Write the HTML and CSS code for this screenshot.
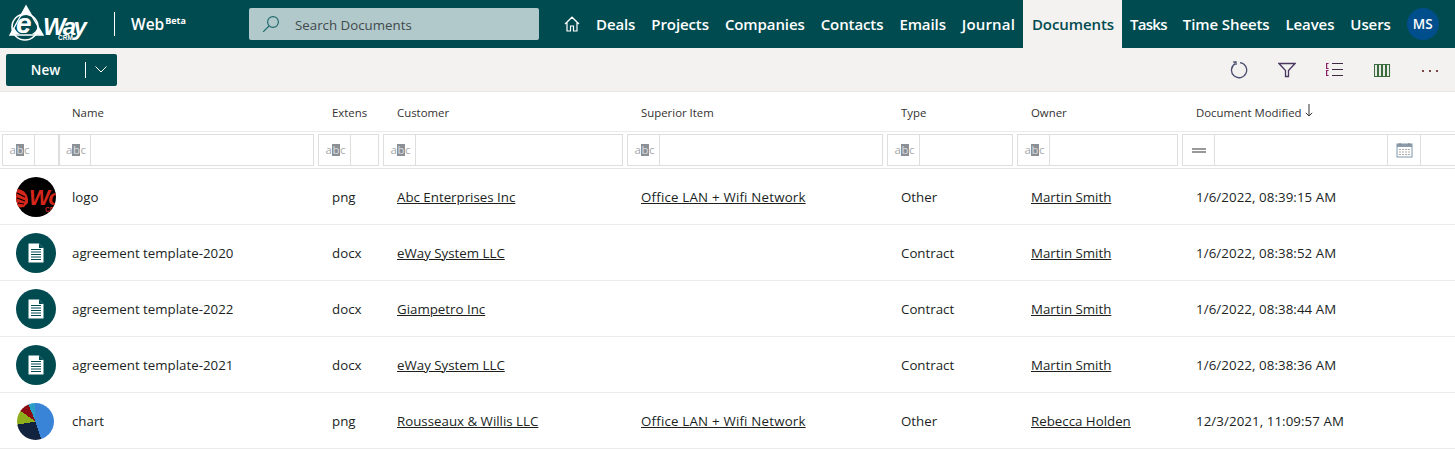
FILE: index.html
```html
<!DOCTYPE html>
<html lang="en">
<head>
<meta charset="utf-8">
<title>eWay-CRM Documents</title>
<link rel="stylesheet" href="styles.css">
</head>
<body>
<header class="topbar">
  <div class="brand">
    <svg class="logo" width="92" height="44" viewBox="0 0 92 44">
      <path d="M18 4 L2 33 L35 33 Z" fill="none" stroke="#fff" stroke-width="1.4"/>
      <circle cx="17" cy="25" r="13" fill="none" stroke="#fff" stroke-width="1.6"/>
      <path d="M18 4 L12 15 Q18 11 24 15 Z M2 33 L6 25 Q8 30 12 32 Z M35 33 L30 25 Q28 30 24 32 Z" fill="#fff"/>
      <text x="8" y="31" class="logo-e">e</text>
      <text x="35" y="33" class="logo-way">Way</text>
      <text x="50" y="37.5" class="logo-crm">CRM</text>
    </svg>
    <span class="brand-sep"></span>
    <span class="brand-web">Web<sup>Beta</sup></span>
  </div>
  <div class="search">
    <svg width="18" height="18" viewBox="0 0 18 18" fill="none" stroke="#1f6a6e" stroke-width="1.2"><circle cx="11" cy="7" r="5.4"/><path d="M7 11 L1.2 16.8"/></svg>
    <span class="search-text">Search Documents</span>
  </div>
  <nav class="nav">
    <svg class="home" width="16" height="16" viewBox="0 0 16 16" fill="none" stroke="#fff" stroke-width="1.2"><path d="M1 8 L8 1.2 L15 8 M3 6.5 V15 H6.5 V10 H9.5 V15 H13 V6.5"/></svg>
    <a class="nav-item">Deals</a>
    <a class="nav-item">Projects</a>
    <a class="nav-item">Companies</a>
    <a class="nav-item">Contacts</a>
    <a class="nav-item">Emails</a>
    <a class="nav-item wide">Journal</a>
    <a class="nav-item active">Documents</a>
    <a class="nav-item tight">Tasks</a>
    <a class="nav-item">Time Sheets</a>
    <a class="nav-item">Leaves</a>
    <a class="nav-item">Users</a>
    <span class="avatar">MS</span>
  </nav>
</header>

<div class="toolbar">
  <button class="new-btn"><span class="new-label">New</span><span class="new-sep"></span>
    <svg width="12" height="7" viewBox="0 0 12 7" fill="none" stroke="#fff" stroke-width="1"><path d="M.5 .5 L6 6 L11.5 .5"/></svg>
  </button>
  <div class="tools">
    <svg width="18" height="18" viewBox="0 0 18 18" fill="none" stroke="#4b4e6e" stroke-width="1.3"><path d="M5.2 2.6 A7.6 7.6 0 1 0 10 1.6"/><path d="M3.2 1 H6 V4"/></svg>
    <svg width="18" height="18" viewBox="0 0 18 18" fill="none" stroke="#4a3660" stroke-width="1.3"><path d="M1 2.5 H17 L10.5 9.5 V15.5 H7.5 V9.5 Z"/></svg>
    <svg width="18" height="18" viewBox="0 0 18 18" fill="none" stroke-width="1.2"><path d="M6 2.5 H17 M6 8.5 H17 M6 14.5 H17" stroke="#3f2a45"/><path d="M2.6 2.5 H.6 V7.5 H2.6 M2.6 9.5 H.6 V14.5 H2.6" stroke="#8a1f66"/></svg>
    <svg width="18" height="18" viewBox="0 0 18 18" fill="none" stroke="#3a6b3c" stroke-width="1.1"><path d="M.5 3.5 H3.5 V15.5 H.5 Z M4.5 3.5 H7.5 V15.5 H4.5 Z M8.5 3.5 H11.5 V15.5 H8.5 Z M12.5 3.5 H15.5 V15.5 H12.5 Z"/></svg>
    <svg width="18" height="18" viewBox="0 0 18 18" fill="#7d4a4a"><rect x="0" y="9" width="2" height="2"/><rect x="7" y="9" width="2" height="2"/><rect x="14" y="9" width="2" height="2"/></svg>
  </div>
</div>

<div class="grid head">
  <div></div>
  <div class="hc first">Name</div>
  <div class="hc">Extens</div>
  <div class="hc">Customer</div>
  <div class="hc">Superior Item</div>
  <div class="hc">Type</div>
  <div class="hc">Owner</div>
  <div class="hc">Document Modified <svg class="sort" width="8" height="13" viewBox="0 0 8 13" fill="none" stroke="#333" stroke-width="1"><path d="M4 0 V12 M.8 8.8 L4 12 L7.2 8.8"/></svg></div>
  <div></div>
</div>

<div class="grid filters">
  <div class="fbox lead"><span class="op"><span class="abc">a<b>b</b>c</span></span></div>
  <div class="fbox"><span class="op"><span class="abc">a<b>b</b>c</span></span></div>
  <div class="fbox"><span class="op"><span class="abc">a<b>b</b>c</span></span></div>
  <div class="fbox"><span class="op"><span class="abc">a<b>b</b>c</span></span></div>
  <div class="fbox"><span class="op"><span class="abc">a<b>b</b>c</span></span></div>
  <div class="fbox"><span class="op"><span class="abc">a<b>b</b>c</span></span></div>
  <div class="fbox"><span class="op"><span class="abc">a<b>b</b>c</span></span></div>
  <div class="fbox date"><span class="op"><span class="eq"></span></span><span class="fill"></span>
    <span class="cal"><svg width="17" height="16" viewBox="0 0 17 16"><rect x="1" y="2" width="15" height="13" fill="#fff" stroke="#7f97ab"/><rect x="1" y="2" width="15" height="3" fill="#8c9bab"/><path d="M4 1 V3 M13 1 V3" stroke="#777"/><path d="M3 7.5 H14 M3 10 H14 M3 12.5 H14" stroke="#a9a9a9" stroke-dasharray="2 1"/></svg></span></div>
  <div class="fbox tail"></div>
</div>

<div class="grid row">
  <div class="ic"><svg class="thumb" width="40" height="40" viewBox="0 0 40 40"><defs><clipPath id="cl"><circle cx="20" cy="20" r="20"/></clipPath></defs><g clip-path="url(#cl)"><rect width="40" height="40" fill="#000"/><path d="M0 12 C8 12 13 18 12 26 L8 30 C4 31 1 30 0 28 Z" fill="#d4261b"/><path d="M1 16 L9 20 M1 21 L9 24 M2 26 L8 27" stroke="#000" stroke-width="1.2"/><text x="13" y="28" class="thumb-logo">Wo</text><text x="29" y="35" class="thumb-crm">CR</text></g></svg></div>
  <div class="c first">logo</div><div class="c">png</div><div class="c"><a>Abc Enterprises Inc</a></div><div class="c"><a class="spaced">Office LAN + Wifi Network</a></div><div class="c">Other</div><div class="c"><a>Martin Smith</a></div><div class="c stamp">1/6/2022, 08:39:15 AM</div><div></div>
</div>
<div class="grid row">
  <div class="ic"><span class="doc"><svg width="16" height="20" viewBox="0 0 16 20"><path d="M.5 .5 H11 L15.5 5 V19.5 H.5 Z" fill="#fff"/><path d="M11 .5 V5 H15.5 Z" fill="#004b50"/><path d="M3 6.5 H13 M3 9 H13 M3 11.5 H13 M3 14 H13 M3 16.5 H13" stroke="#004b50" stroke-width="1"/></svg></span></div>
  <div class="c first">agreement template-2020</div><div class="c">docx</div><div class="c"><a>eWay System LLC</a></div><div class="c"></div><div class="c">Contract</div><div class="c"><a>Martin Smith</a></div><div class="c stamp">1/6/2022, 08:38:52 AM</div><div></div>
</div>
<div class="grid row">
  <div class="ic"><span class="doc"><svg width="16" height="20" viewBox="0 0 16 20"><path d="M.5 .5 H11 L15.5 5 V19.5 H.5 Z" fill="#fff"/><path d="M11 .5 V5 H15.5 Z" fill="#004b50"/><path d="M3 6.5 H13 M3 9 H13 M3 11.5 H13 M3 14 H13 M3 16.5 H13" stroke="#004b50" stroke-width="1"/></svg></span></div>
  <div class="c first">agreement template-2022</div><div class="c">docx</div><div class="c"><a>Giampetro Inc</a></div><div class="c"></div><div class="c">Contract</div><div class="c"><a>Martin Smith</a></div><div class="c stamp">1/6/2022, 08:38:44 AM</div><div></div>
</div>
<div class="grid row">
  <div class="ic"><span class="doc"><svg width="16" height="20" viewBox="0 0 16 20"><path d="M.5 .5 H11 L15.5 5 V19.5 H.5 Z" fill="#fff"/><path d="M11 .5 V5 H15.5 Z" fill="#004b50"/><path d="M3 6.5 H13 M3 9 H13 M3 11.5 H13 M3 14 H13 M3 16.5 H13" stroke="#004b50" stroke-width="1"/></svg></span></div>
  <div class="c first">agreement template-2021</div><div class="c">docx</div><div class="c"><a>eWay System LLC</a></div><div class="c"></div><div class="c">Contract</div><div class="c"><a>Martin Smith</a></div><div class="c stamp">1/6/2022, 08:38:36 AM</div><div></div>
</div>
<div class="grid row">
  <div class="ic"><span class="pie"></span></div>
  <div class="c first">chart</div><div class="c">png</div><div class="c"><a>Rousseaux &amp; Willis LLC</a></div><div class="c"><a class="spaced">Office LAN + Wifi Network</a></div><div class="c">Other</div><div class="c"><a>Rebecca Holden</a></div><div class="c stamp">12/3/2021, 11:09:57 AM</div><div></div>
</div>
</body>
</html>
```
FILE: styles.css
```css
* { box-sizing: border-box; }
html, body { margin: 0; padding: 0; background: #fff; overflow: hidden; }
body { font-family: "Open Sans", "Noto Sans", sans-serif; font-size: 13px; color: #201f1e; }

.topbar { height: 48px; background: #004b50; display: flex; align-items: stretch; color: #fff; }
.brand { width: 249px; display: flex; align-items: center; padding-left: 8px; flex: none; }
.logo { flex: none; }
.logo-e { font: italic 700 28px "Liberation Sans", sans-serif; fill: #fff; }
.logo-way { font: italic 700 24px "Liberation Sans", sans-serif; fill: #fff; letter-spacing: -2.5px; }
.logo-crm { font: 700 6.5px "Liberation Sans", sans-serif; fill: #fff; }
.brand-sep { width: 1px; height: 24px; background: #fff; margin-left: 14px; }
.brand-web { font-weight: 600; font-size: 15.5px; margin-left: 16px; line-height: 20px; }
.brand-web sup { font-size: 9px; font-weight: 700; vertical-align: 6px; line-height: 0; margin-left: 1px; }

.search { width: 290px; height: 32px; margin-top: 8px; background: #b2c9cb; border-radius: 2px; display: flex; align-items: center; padding-left: 13px; gap: 15px; color: #3f4a4c; font-size: 13.3px; flex: none; }
.search-text { padding-top: 2px; }

.nav { display: flex; align-items: stretch; margin-left: 25px; flex: none; }
.home { align-self: center; margin-right: 8px; }
.nav-item { display: flex; align-items: center; padding: 0 8px; font-weight: 600; font-size: 15px; letter-spacing: -.1px; white-space: nowrap; }
.nav-item.wide { letter-spacing: .15px; }
.nav-item.tight { letter-spacing: -.7px; }
.nav-item.active { background: #f3f2f1; color: #004b50; padding: 0 8px 0 9px; }
.avatar { width: 32px; height: 32px; border-radius: 50%; background: #004e8c; align-self: center; display: flex; align-items: center; justify-content: center; font-weight: 600; font-size: 13.5px; margin-left: 8px; }

.toolbar { height: 44px; background: #f3f2f1; border-bottom: 1px solid #e8e6e4; display: flex; align-items: center; justify-content: space-between; padding: 0 15px 0 6px; }
.new-btn { width: 111px; height: 32px; padding: 0; background: #004b50; border: 0; border-radius: 2px; color: #fff; display: flex; align-items: center; font-family: inherit; }
.new-label { width: 79px; text-align: center; font-weight: 600; font-size: 13.5px; }
.new-sep { width: 1px; height: 16px; background: #fff; margin-right: 9px; }
.tools { display: flex; gap: 30px; align-items: center; }

.grid { display: grid; grid-template-columns: 59px 259px 65px 244px 260px 130px 165px 239px 1fr; }
.head { height: 40px; padding-top: 2px; border-bottom: 1px solid #edebe9; align-items: center; font-size: 11.4px; color: #323130; }
.hc { padding-left: 14px; display: flex; align-items: center; gap: 3px; white-space: nowrap; }
.hc.first, .c.first { padding-left: 13px; }
.sort { margin-top: -4px; }

.filters { height: 37px; border-bottom: 1px solid #e6e4e2; padding-top: 2px; }
.fbox { height: 32px; margin-right: 4px; border: 1px solid #dedede; display: flex; background: #fff; }
.fbox.lead { margin-left: 2px; margin-right: 0; }
.fbox.date { margin-right: 0; }
.fbox.tail { margin-right: 0; border-left: 0; border-right: 0; }
.op { width: 32px; flex: none; border-right: 1px solid #dedede; display: flex; align-items: center; justify-content: center; padding-left: 2px; }
.fbox.date .op { padding-left: 0; }
.fbox.lead + .fbox .op { width: 31px; }
.abc { font-size: 11.5px; color: #a4a8ad; line-height: 12px; }
.abc b { font-weight: 400; background: #8b9097; color: #d8dadc; padding: 0 .5px; display: inline-block; height: 12px; }
.eq { width: 14px; height: 5px; border-top: 2px solid #999; border-bottom: 2px solid #999; }
.fill { flex: 1; }
.cal { width: 33px; flex: none; border-left: 1px solid #dedede; display: flex; align-items: center; justify-content: center; }

.row { height: 56px; border-bottom: 1px solid #edebe9; align-items: center; }
.ic { padding-left: 16px; display: flex; }
.c { padding-left: 14px; white-space: nowrap; font-size: 13.3px; color: #201f1e; }
.c.stamp { letter-spacing: .08px; }
.c a { text-decoration: underline; color: #201f1e; }
.c a.spaced { letter-spacing: .2px; }
.doc { width: 40px; height: 40px; border-radius: 50%; background: #004b50; display: flex; align-items: center; justify-content: center; }
.thumb { display: block; }
.thumb-logo { font: italic 700 22px "Liberation Sans", sans-serif; fill: #d4261b; letter-spacing: -1px; }
.thumb-crm { font: 700 6.5px "Liberation Sans", sans-serif; fill: #d4261b; }
.pie { width: 37px; height: 37px; margin: 2px 0 0 1px; border-radius: 50%; background: conic-gradient(#3a84d8 0 162deg, #12233f 162deg 260deg, #8fae1b 260deg 305deg, #8a0c10 305deg 337deg, #2b9fc4 337deg 360deg); }
```
